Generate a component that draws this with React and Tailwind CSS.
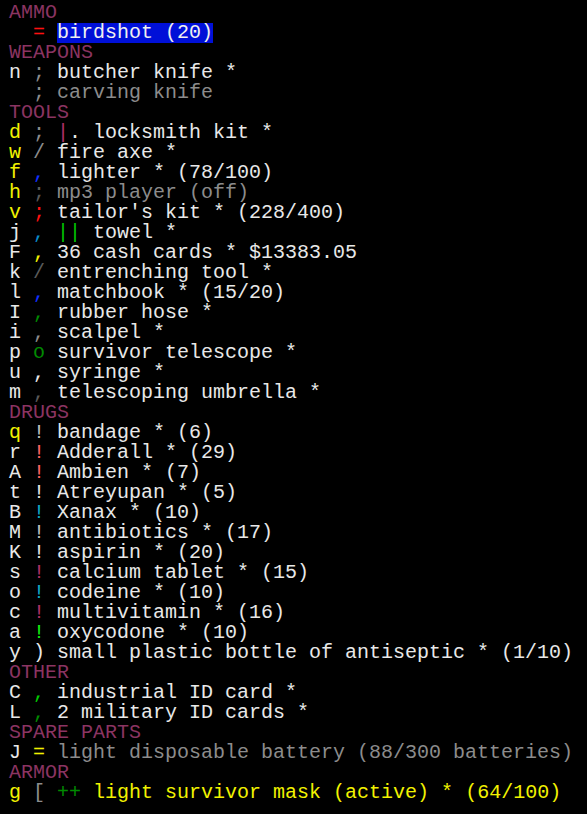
import React from "react";

const C = {
  w: "text-[#e8e8e8]",
  lg: "text-[#c0c0c0]",
  g: "text-[#8c8c8c]",
  dg: "text-[#5a5a5a]",
  h: "text-[#8b3462]",
  y: "text-[#f2f200]",
  r: "text-[#ff1010]",
  lr: "text-[#ff6464]",
  b: "text-[#1030ff]",
  c: "text-[#0a8ac8]",
  lc: "text-[#10a8c8]",
  gr: "text-[#00c800]",
  lgr: "text-[#10f010]",
  dgr: "text-[#008a00]",
  m: "text-[#b03068]",
};

const H = (t) => [[t, "h"]];
const lines = [
  H("AMMO"),
  [["  ", "w"], ["=", "r"], [" ", "w"], ["birdshot (20)", "sel"]],
  H("WEAPONS"),
  [["n ", "w"], [";", "g"], [" butcher knife *", "w"]],
  [["  ", "w"], [";", "g"], [" carving knife", "g"]],
  H("TOOLS"),
  [["d ", "y"], [";", "g"], [" ", "w"], ["|", "m"], [".", "w"], [" locksmith kit *", "w"]],
  [["w ", "y"], ["/", "g"], [" fire axe *", "w"]],
  [["f ", "y"], [",", "b"], [" lighter * (78/100)", "w"]],
  [["h ", "y"], [";", "dg"], [" mp3 player (off)", "g"]],
  [["v ", "y"], [";", "r"], [" tailor's kit * (228/400)", "w"]],
  [["j ", "w"], [",", "c"], [" ", "w"], ["||", "gr"], [" towel *", "w"]],
  [["F ", "w"], [",", "y"], [" 36 cash cards * $13383.05", "w"]],
  [["k ", "w"], ["/", "dg"], [" entrenching tool *", "w"]],
  [["l ", "w"], [",", "b"], [" matchbook * (15/20)", "w"]],
  [["I ", "w"], [",", "dgr"], [" rubber hose *", "w"]],
  [["i ", "w"], [",", "g"], [" scalpel *", "w"]],
  [["p ", "w"], ["o", "dgr"], [" survivor telescope *", "w"]],
  [["u ", "w"], [",", "w"], [" syringe *", "w"]],
  [["m ", "w"], [",", "dg"], [" telescoping umbrella *", "w"]],
  H("DRUGS"),
  [["q ", "y"], ["!", "lg"], [" bandage * (6)", "w"]],
  [["r ", "w"], ["!", "lr"], [" Adderall * (29)", "w"]],
  [["A ", "w"], ["!", "lr"], [" Ambien * (7)", "w"]],
  [["t ", "w"], ["!", "w"], [" Atreyupan * (5)", "w"]],
  [["B ", "w"], ["!", "lc"], [" Xanax * (10)", "w"]],
  [["M ", "w"], ["!", "lg"], [" antibiotics * (17)", "w"]],
  [["K ", "w"], ["!", "w"], [" aspirin * (20)", "w"]],
  [["s ", "w"], ["!", "m"], [" calcium tablet * (15)", "w"]],
  [["o ", "w"], ["!", "lc"], [" codeine * (10)", "w"]],
  [["c ", "w"], ["!", "m"], [" multivitamin * (16)", "w"]],
  [["a ", "w"], ["!", "lgr"], [" oxycodone * (10)", "w"]],
  [["y ", "w"], [")", "w"], [" small plastic bottle of antiseptic * (1/10)", "w"]],
  H("OTHER"),
  [["C ", "w"], [",", "gr"], [" industrial ID card *", "w"]],
  [["L ", "w"], [",", "dgr"], [" 2 military ID cards *", "w"]],
  H("SPARE PARTS"),
  [["J ", "w"], ["=", "y"], [" light disposable battery (88/300 batteries)", "g"]],
  H("ARMOR"),
  [["g ", "y"], ["[", "g"], [" ", "w"], ["++", "dgr"], [" light survivor mask (active) * (64/100)", "y"]],
];

export default function App() {
  return (
    <div
      className="w-[587px] h-[814px] bg-black overflow-hidden pl-[9px] pt-[3px] text-[20px]"
      style={{ fontFamily: '"Liberation Mono", "DejaVu Sans Mono", monospace' }}
    >
      {lines.map((segs, i) => (
        <div key={i} className="h-[20px] leading-[20px] whitespace-pre">
          {segs.map(([t, k], j) =>
            k === "sel" ? (
              <span key={j} className="bg-[#0010d8] text-[#f0f0f0] inline-block h-[20px] align-top">
                {t}
              </span>
            ) : (
              <span key={j} className={C[k]}>
                {t}
              </span>
            )
          )}
        </div>
      ))}
    </div>
  );
}
